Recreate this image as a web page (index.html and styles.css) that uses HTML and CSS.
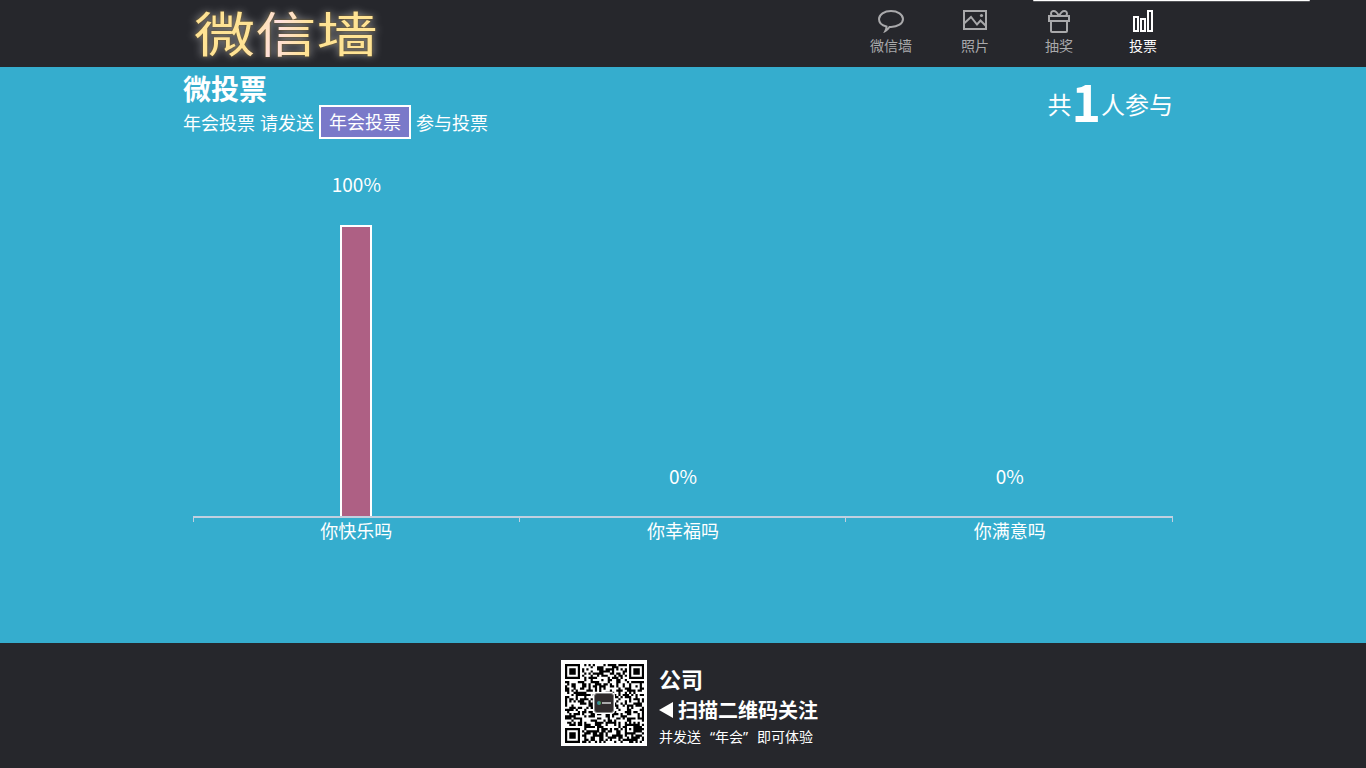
FILE: index.html
```html
<!DOCTYPE html>
<html lang="zh-CN">
<head>
<meta charset="utf-8">
<title>微信墙</title>
<link rel="stylesheet" href="styles.css">
</head>
<body>
<header class="header">
  <div class="top-panel"></div>
  <div class="wrap header-in">
    <div class="logo"><span class="logo-text">微信墙</span></div>
    <nav class="nav">
      <a class="nav-item">
        <svg class="icon" viewBox="0 0 32 26"><path d="M11.500 19.500C6.800 18.500 4 15.400 4 12 4 7.500 9.300 4 16 4s12 3.500 12 8-5.300 8-12 8h-1.500c-1.200 1.800-2.300 2.800-4 3.800.7-1.400 1-2.800 1-4.300z"/></svg>
        <span>微信墙</span>
      </a>
      <a class="nav-item">
        <svg class="icon" viewBox="0 0 32 26"><path d="M5 4h22v18H5z"/><path d="M5 16.500l7-6.500 6 7.500 3.500-4L27 19"/><circle class="dot" cx="22.500" cy="8.500" r="1.600"/></svg>
        <span>照片</span>
      </a>
      <a class="nav-item">
        <svg class="icon" viewBox="0 0 32 26"><path d="M6 9h20v5H6zM8 14v10q0 1 1 1h14q1 0 1-1V14M16 9C14 5 11.500 3.500 9.500 4.200 7.700 5 7.500 7.300 9 9M16 9c2-4 4.500-5.500 6.500-4.800C24.300 5 24.500 7.300 23 9"/></svg>
        <span>抽奖</span>
      </a>
      <a class="nav-item active">
        <svg class="icon" viewBox="0 0 32 26"><path d="M7 10h4v14H7zM14 12h4v12h-4zM21 4h4v20h-4z"/></svg>
        <span>投票</span>
      </a>
    </nav>
  </div>
</header>
<main class="main">
  <div class="wrap">
    <div class="intro">
      <div>
        <h1 class="title">微投票</h1>
        <p class="hint"><span>年会投票 请发送</span><span class="keyword">年会投票</span><span>参与投票</span></p>
      </div>
      <div class="total"><span>共</span><b>1</b><span>人参与</span></div>
    </div>
    <div class="chart">
      <div class="col"><span class="value top">100%</span><div class="bar" style="height:291px"></div></div>
      <div class="col"><span class="value">0%</span></div>
      <div class="col"><span class="value">0%</span></div>
    </div>
    <div class="labels"><span>你快乐吗</span><span>你幸福吗</span><span>你满意吗</span></div>
  </div>
</main>
<footer class="footer">
  <div class="qr"><svg id="qr" viewBox="0 0 37 37"></svg><div class="qr-logo"><i></i><em></em></div></div>
  <div class="follow">
    <strong class="company">公司</strong>
    <strong class="scan"><svg class="arrow" viewBox="0 0 14 16"><path d="M0 8L14 0v16z"/></svg>扫描二维码关注</strong>
    <span class="note">并发送<span class="quote open">“</span>年会<span class="quote">”</span>即可体验</span>
  </div>
</footer>
<script src="qr.js"></script>
</body>
</html>
```
FILE: styles.css
```css
* { box-sizing: border-box; }
body {
  margin: 0;
  height: 768px;
  display: flex;
  flex-direction: column;
  overflow: hidden;
  background: #26272c;
  color: #fff;
  font-family: "Noto Sans CJK SC", sans-serif;
}
.wrap { width: 1000px; margin: 0 auto; }
.header { height: 67px; position: relative; background: #26272c; }
.top-panel {
  position: absolute; top: 0; left: 1033px;
  width: 277px; height: 1px;
  background: #fff; border-radius: 0 0 2px 2px;
  box-shadow: 0 1px 0 #55565a;
}
.header-in { display: flex; justify-content: space-between; }
.logo { width: 210px; height: 67px; padding-left: 11px; }
.logo-text {
  display: block; width: 152px;
  font-size: 49px; line-height: 62px; font-weight: 400;
  transform: scale(1.25, .98); transform-origin: 0 50%;
  white-space: nowrap;
  background: linear-gradient(100deg, #ffe394 30%, #ffdfe0 44%, #ffe394 60%);
  -webkit-background-clip: text; background-clip: text;
  color: transparent;
  filter: drop-shadow(0 0 1px #6b531d) drop-shadow(0 0 4px rgba(255,255,255,.5));
}
.nav { display: flex; width: 336px; margin-right: -2px; }
.nav-item {
  width: 84px; padding-top: 7px;
  display: flex; flex-direction: column; align-items: center;
  color: #a9a9ab; font-size: 14px; line-height: 20px;
}
.nav-item span { margin-top: 2px; }
.icon { width: 32px; height: 26px; fill: none; stroke: #a9a9ab; stroke-width: 2; }
.dot { fill: #a9a9ab; stroke: none; }
.active { color: #fff; }
.active .icon { stroke: #fff; }
.main { height: 576px; background: #35adce; }
.intro { height: 103px; padding-top: 5px; display: flex; justify-content: space-between; }
.title { margin: 0; font-size: 28px; line-height: 33px; }
.hint { margin: 0; display: flex; align-items: center; font-size: 18px; line-height: 32px; height: 34px; }
.hint > span:first-child { word-spacing: 1px; }
.keyword {
  margin: 0 5px; padding: 0 8px; height: 34px; line-height: 29px;
  border: 2px solid #fff; background: #7a79c9;
}
.total { display: flex; align-items: flex-start; height: 60px; margin-right: 10px; font-size: 24px; line-height: 60px; }
.total span { padding-top: 2px; }
.total b { font-size: 50px; line-height: 56px; }
.chart {
  width: 980px; height: 348px; margin-left: 10px;
  display: grid; grid-template-columns: repeat(3, 1fr);
  border-bottom: 2px solid #c0d0e0;
}
.col { display: flex; flex-direction: column; justify-content: flex-end; align-items: center; }
.value { font-size: 19px; line-height: 24px; margin-bottom: 28px; }
.value.top { margin-bottom: 29px; }
.bar { width: 32px; border: 2px solid #fff; border-bottom: 0; background: #ae6084; }
.labels {
  width: 980px; height: 28px; margin-left: 10px;
  display: grid; grid-template-columns: repeat(3, 1fr);
  font-size: 18px; line-height: 24px; text-align: center;
  background: linear-gradient(#c0d0e0, #c0d0e0) 0 0 / 1px 4px no-repeat,
    linear-gradient(#c0d0e0, #c0d0e0) 326px 0 / 1px 4px no-repeat,
    linear-gradient(#c0d0e0, #c0d0e0) 652px 0 / 1px 4px no-repeat,
    linear-gradient(#c0d0e0, #c0d0e0) 979px 0 / 1px 4px no-repeat;
}
.footer { height: 125px; padding: 17px 0 0 561px; display: flex; background: #26272c; }
.qr {
  width: 86px; height: 86px; padding: 4px 3px 3px 4px; flex: none;
  display: grid; place-items: center; background: #fff;
}
.qr > * { grid-area: 1 / 1; }
#qr { width: 79px; height: 79px; fill: #000; }
.qr-logo {
  width: 20px; height: 20px; z-index: 1; margin: 0 1px 1px 0;
  display: flex; align-items: center; justify-content: center; gap: 1px;
  border: 1px solid #888; border-radius: 3px;
  background: #302c2d; box-shadow: 0 0 0 1px #fff;
}
.qr-logo i { width: 4px; height: 4px; border-radius: 50%; background: linear-gradient(90deg, #2585ba, #59a350); }
.qr-logo em { width: 9px; height: 2px; background: #aaa; }
.follow { margin-left: 12px; padding-top: 3px; display: flex; flex-direction: column; }
.company { font-size: 22px; line-height: 31px; }
.scan { display: flex; align-items: center; gap: 5px; font-size: 20px; line-height: 34px; height: 32px; }
.arrow { width: 14px; height: 16px; fill: #fff; }
.note { font-size: 14px; line-height: 20px; white-space: nowrap; }
.quote { display: inline-block; width: 14px; line-height: 16px; font-family: "Noto Sans", sans-serif; }
.open { text-align: right; }
```
FILE: qr.js
```js
// Draws the QR-style module grid as one SVG path.
const size = 37;
let seed = 20147;
const next = () => (seed = (seed * 1103515245 + 12345) % 2147483648) / 2147483648;
const ring = (x, y, cx, cy) => Math.max(Math.abs(x - cx), Math.abs(y - cy));
let d = '';
for (let y = 0; y < size; y++) {
  for (let x = 0; x < size; x++) {
    let on = next() > 0.49;
    for (const [cx, cy] of [[3, 3], [33, 3], [3, 33]]) {
      const r = ring(x, y, cx, cy);
      if (r <= 4) on = r < 2 || r === 3;
    }
    const a = ring(x, y, 30, 30);
    if (a <= 2) on = a !== 1;
    if (on) d += `M${x} ${y}h1.03v1.03h-1.03z`;
  }
}
const path = document.createElementNS('http://www.w3.org/2000/svg', 'path');
path.setAttribute('d', d);
document.getElementById('qr').appendChild(path);
```
